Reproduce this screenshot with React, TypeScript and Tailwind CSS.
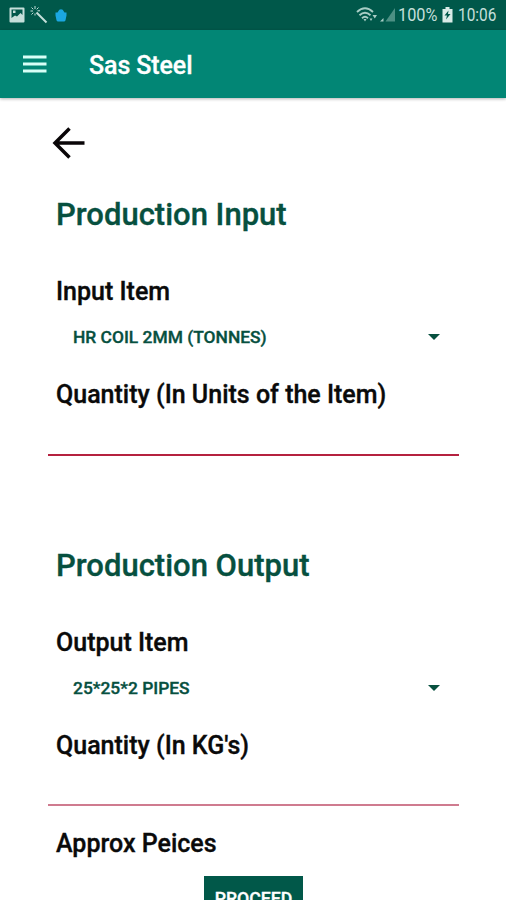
interface SectionProps {
  title: string;
  itemLabel: string;
  item: string;
  quantityLabel: string;
  lineClass: string;
}

function StatusBar() {
  return (
    <div className="flex h-[30px] shrink-0 items-center justify-between bg-[#00584a] pl-[9px] pr-[9px] text-[#c5dfda]">
      <div className="flex items-center">
        <svg width="16" height="16" viewBox="0 0 16 16">
          <path fillRule="evenodd" fill="currentColor" d="M1.5 0.5h13a1 1 0 0 1 1 1v13a1 1 0 0 1-1 1h-13a1 1 0 0 1-1-1v-13a1 1 0 0 1 1-1zM2.5 2.5v8.500l3.500-2.500 2 1 3.500-3.500 2 2v-5.500z" />
          <path fill="currentColor" d="M4 3.500h2.500v2.500h-2.500z" />
        </svg>
        <svg className="ml-[5px]" width="18" height="18" viewBox="0 0 18 18" fill="none" stroke="currentColor">
          <path strokeWidth="2" d="M6.500 6.500l10 10" />
          <path strokeWidth="1" d="M5 0v3M0.500 5h2.500M1.500 1.500l1.800 1.800M8.500 1.500l-1.800 1.800M1.500 8.500l1.800-1.800M7.500 4.800h2.500M5 7.500v2" />
        </svg>
        <svg className="ml-[7px]" width="12" height="13" viewBox="0 0 12 13">
          <path fill="#1ba7e2" d="M2.500 3.500l1.800-2.800q1.700-1 3.400 0l1.800 2.800h2v3l-1 4.700q-.3 1.300-1.600 1.300h-5.800q-1.300 0-1.600-1.300l-1-4.700v-3z" />
        </svg>
      </div>
      <div className="flex items-center">
        <svg width="42" height="18" viewBox="-4 0 42 18" fill="none">
          <g stroke="#a8cdc5" strokeWidth="1.900">
            <path d="M-3 6q8-7.500 16 0" />
            <path d="M-0.500 9.200q5.500-5 11 0" />
            <path d="M2 12.200q3-2.700 6 0" />
          </g>
          <path fill="#a8cdc5" d="M3.500 13h3l-1.500 2.500zM12.500 9h4.500l-2.200 3.500zM9.500 12.500h3l-1.500 2.500zM20 15.500h3.500v-3.500z" />
          <path fill="#4d9084" d="M25.500 15.500h9.500v-13.500z" />
        </svg>
        <span className="w-[41px] origin-left scale-x-[0.93] whitespace-nowrap text-[17.500px] leading-[26px]">100%</span>
        <svg className="ml-[3px]" width="11" height="16" viewBox="0 0 11 16">
          <path fill="#d9ebe7" d="M3.500 0h4v2h3v13.500h-10v-13.500h3z" />
          <path fill="#00584a" d="M6.500 3.500l-4 5h2.500l-1 4 4.500-5.500h-2.500z" />
        </svg>
        <span className="ml-[5px] w-[39px] origin-left scale-x-[0.88] whitespace-nowrap text-[17.500px] leading-[26px]">10:06</span>
      </div>
    </div>
  );
}

function Section({ title, itemLabel, item, quantityLabel, lineClass }: SectionProps) {
  return (
    <section>
      <h1 className="ml-2 text-[31px] leading-[40px] text-[#07503f]">{title}</h1>
      <p className="ml-2 mt-[41px] text-[25px] leading-[32px]">{itemLabel}</p>
      <div className="flex h-[57px] items-center justify-between pl-[25px] pr-[19px] text-[#07503f]">
        <span className="text-[17.400px] leading-[26px]">{item}</span>
        <svg width="12" height="6" viewBox="0 0 12 6">
          <path fill="currentColor" d="M0 0h12l-6 6z" />
        </svg>
      </div>
      <p className="ml-2 mt-[14px] text-[25px] leading-[32px]">{quantityLabel}</p>
      <div className={lineClass} />
    </section>
  );
}

export default function App() {
  return (
    <div className="flex h-[900px] w-full flex-col overflow-hidden bg-white font-['Roboto',sans-serif] text-[#0a0a0a]">
      <StatusBar />
      <header className="flex h-[68px] shrink-0 items-center bg-[#028675] pl-[23px] text-white shadow-[0_1px_3px_rgba(0,0,0,0.3)]">
        <svg width="24" height="18" viewBox="0 0 24 18">
          <path fill="#d8fff7" d="M0 0.500h23.500v3h-23.500zM0 7.500h23.500v3h-23.500zM0 14.500h23.500v3h-23.500z" />
        </svg>
        <span className="ml-[42px] mt-[4px] text-[25px] font-medium tracking-[-0.1px] [-webkit-text-stroke:0.3px]">Sas Steel</span>
      </header>

      <main className="pl-12 pr-[47px] pt-[29px] font-medium [-webkit-text-stroke:0.35px]">
        <svg className="ml-[4px]" width="33" height="33" viewBox="0 0 33 33" fill="none" stroke="#090507" strokeWidth="3.500">
          <path d="M32.500 16h-30M17.500 1.500l-14.500 14.500 14.500 14.500" />
        </svg>
        <div className="mt-[35px]">
          <Section
            title="Production Input"
            itemLabel="Input Item"
            item="HR COIL 2MM (TONNES)"
            quantityLabel="Quantity (In Units of the Item)"
            lineClass="mt-[43px] h-[2px] bg-[#b5213f]"
          />
        </div>
        <div className="mt-[90px]">
          <Section
            title="Production Output"
            itemLabel="Output Item"
            item="25*25*2 PIPES"
            quantityLabel="Quantity (In KG's)"
            lineClass="mt-[42px] h-[2px] bg-[#cf7b8f]"
          />
        </div>
        <p className="ml-2 mt-[22px] text-[25px] leading-[32px]">Approx Peices</p>
        <button className="ml-[156px] mt-[16px] block h-[46px] w-[99px] bg-[#015849] text-[17.700px] text-white">
          PROCEED
        </button>
      </main>
    </div>
  );
}
